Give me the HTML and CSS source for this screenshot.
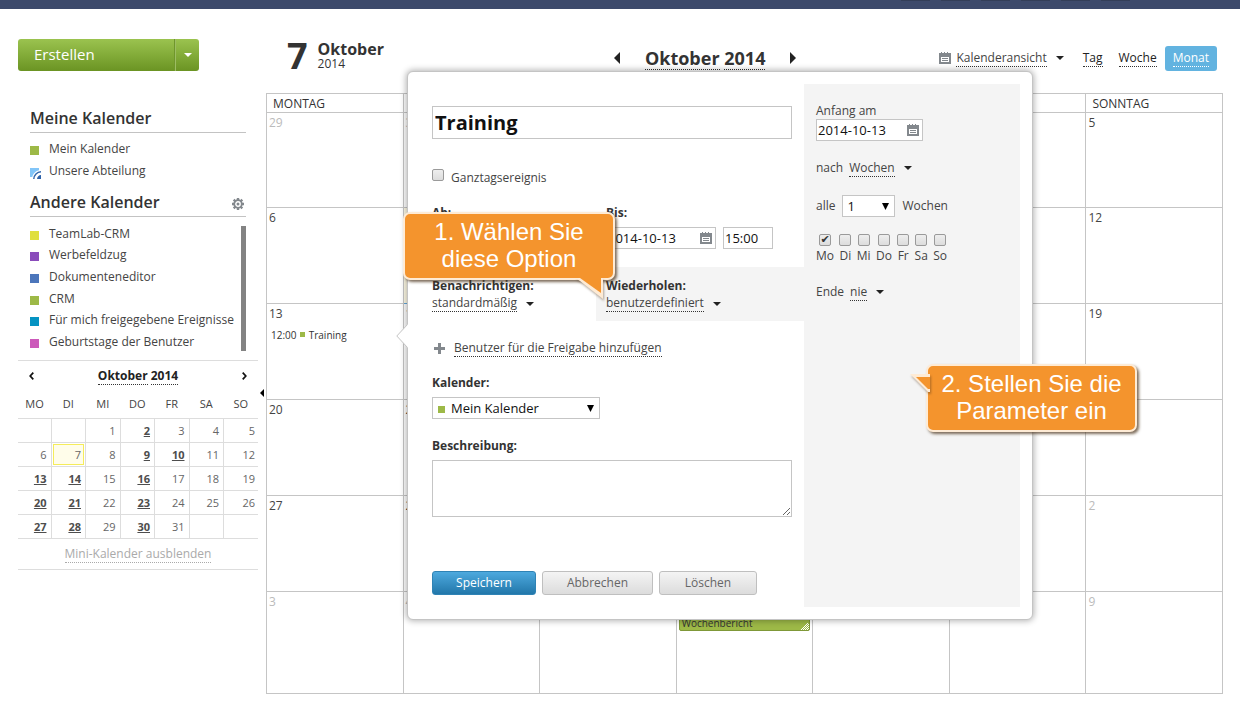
FILE: index.html
```html
<!DOCTYPE html>
<html lang="de">
<head>
<meta charset="utf-8">
<title>Kalender</title>
<link rel="stylesheet" href="styles.css">
</head>
<body>
<svg class="defs" aria-hidden="true">
  <symbol id="cal" viewBox="0 0 12 12"><path fill="#83888d" d="M0 1h2V0h1v1h2V0h1v1h2V0h1v1h3v11H0z"/><path fill="#fff" d="M2 5h8v5H2z"/><path fill="#83888d" d="M3 6h6v1H3zM3 8h6v1H3z"/></symbol>
  <symbol id="down" viewBox="0 0 8 4"><path fill="#222" d="M0 0h8L4 4z"/></symbol>
  <symbol id="caret" viewBox="0 0 7 7"><path fill="#000" d="M0 0h7L3.500 7z"/></symbol>
</svg>

<header class="topbar"><i></i><i></i><i></i><i></i><i></i><i></i></header>

<div class="page">
  <aside class="sidebar">
    <div class="create">
      <button class="create-main" type="button">Erstellen</button>
      <button class="create-more" type="button" aria-label="Mehr"><svg width="8" height="4" viewBox="0 0 8 4"><path fill="#fff" d="M0 0h8L4 4z"/></svg></button>
    </div>

    <div class="group">
      <h2>Meine Kalender</h2>
      <ul class="cals own">
        <li><i class="dot green"></i>Mein Kalender</li>
        <li><svg class="feed" width="11" height="11" viewBox="0 0 11 11"><path fill="#82c5f8" d="M0 0h9v9H0z"/><path fill="#fff" d="M2 11C2 6 6 2 11 2v9z"/><path fill="none" stroke="#3468ad" stroke-width="1.500" d="M3.800 11C4 7 7 4 11 3.800"/><path fill="#2d62aa" d="M7 11c0-2 2-4 4-4v4z"/></svg>Unsere Abteilung</li>
      </ul>
    </div>
    <div class="group">
      <h2>Andere Kalender
        <button class="gear" type="button" aria-label="Einstellungen"><svg width="12" height="12" viewBox="0 0 12 12"><path stroke="#83888d" stroke-width="2.400" d="M6 0v2.500M6 9.500V12M0 6h2.500M9.500 6H12M1.700 1.700l1.800 1.800M8.500 8.500l1.800 1.800M1.700 10.300l1.800-1.800M8.500 3.500l1.800-1.800"/><circle cx="6" cy="6" r="3.800" fill="none" stroke="#83888d" stroke-width="1.800"/><circle cx="6" cy="6" r="1.500" fill="#83888d"/></svg></button>
      </h2>
      <div class="scroll">
        <ul class="cals">
          <li><i class="dot yellow"></i>TeamLab-CRM</li>
          <li><i class="dot violet"></i>Werbefeldzug</li>
          <li><i class="dot blue"></i>Dokumenteneditor</li>
          <li><i class="dot green"></i>CRM</li>
          <li><i class="dot cyan"></i>Für mich freigegebene Ereignisse</li>
          <li><i class="dot pink"></i>Geburtstage der Benutzer</li>
        </ul>
        <div class="bar"></div>
      </div>
    </div>

    <section class="mini">
      <div class="mini-head">
        <button type="button" aria-label="Zurück"><svg width="5" height="8" viewBox="0 0 5 8"><path fill="none" stroke="#111" stroke-width="1.700" d="M4.300 .6L1.200 4l3.100 3.400"/></svg></button>
        <strong><span class="dotted">Oktober</span> <span class="dotted">2014</span></strong>
        <button type="button" aria-label="Weiter"><svg width="5" height="8" viewBox="0 0 5 8"><path fill="none" stroke="#111" stroke-width="1.700" d="M.7.6L3.800 4 .7 7.400"/></svg></button>
      </div>
      <table>
        <thead><tr><th class="first">MO</th><th>DI</th><th>MI</th><th>DO</th><th>FR</th><th>SA</th><th>SO</th></tr></thead>
        <tbody>
          <tr><td></td><td></td><td>1</td><td><b>2</b></td><td>3</td><td>4</td><td>5</td></tr>
          <tr><td>6</td><td class="now"><div>7</div></td><td>8</td><td><b>9</b></td><td><b>10</b></td><td>11</td><td>12</td></tr>
          <tr><td><b>13</b></td><td><b>14</b></td><td>15</td><td><b>16</b></td><td>17</td><td>18</td><td>19</td></tr>
          <tr><td><b>20</b></td><td><b>21</b></td><td>22</td><td><b>23</b></td><td>24</td><td>25</td><td>26</td></tr>
          <tr><td><b>27</b></td><td><b>28</b></td><td>29</td><td><b>30</b></td><td>31</td><td></td><td></td></tr>
        </tbody>
      </table>
      <div class="mini-foot"><a href="#" class="dotted">Mini-Kalender ausblenden</a></div>
    </section>
  </aside>

  <button class="collapse" type="button" aria-label="Einklappen"><svg width="4" height="8" viewBox="0 0 4 8"><path d="M4 0v8L0 4z"/></svg></button>

  <main class="main">
    <div class="main-head">
      <div class="today"><b class="num">7</b><div><b>Oktober</b><span>2014</span></div></div>
      <div class="nav">
        <button type="button" aria-label="Vorheriger Monat"><svg width="6" height="12" viewBox="0 0 6 12"><path fill="#222" d="M6 0v12L0 6z"/></svg></button>
        <strong><span class="dotted">Oktober</span> <span class="dotted">2014</span></strong>
        <button type="button" aria-label="Nächster Monat"><svg width="6" height="12" viewBox="0 0 6 12"><path fill="#222" d="M0 0v12l6-6z"/></svg></button>
      </div>
      <div class="views">
        <svg width="12" height="12"><use href="#cal"/></svg>
        <a href="#" class="dotted view-menu">Kalenderansicht</a>
        <svg class="view-arrow" width="8" height="4"><use href="#down"/></svg>
        <a href="#" class="dotted dark">Tag</a>
        <a href="#" class="dotted dark week">Woche</a>
        <a href="#" class="active"><span class="dotted">Monat</span></a>
      </div>
    </div>

    <table class="month">
      <thead><tr><th>MONTAG</th><th></th><th></th><th></th><th></th><th></th><th>SONNTAG</th></tr></thead>
      <tbody>
        <tr><td class="off">29</td><td class="off">30</td><td></td><td></td><td></td><td></td><td>5</td></tr>
        <tr><td>6</td><td class="current"></td><td></td><td></td><td></td><td></td><td>12</td></tr>
        <tr><td>13<div class="event">12:00 <i></i> Training</div></td><td>14</td><td></td><td></td><td></td><td></td><td>19</td></tr>
        <tr><td>20</td><td>21</td><td></td><td></td><td></td><td></td><td></td></tr>
        <tr><td>27</td><td>28</td><td></td><td></td><td></td><td></td><td class="off">2</td></tr>
        <tr><td class="off">3</td><td class="off">4</td><td></td><td class="booked"><div class="block">Wochenbericht<svg width="8" height="8" viewBox="0 0 8 8"><path stroke="#fff" stroke-width="1" stroke-dasharray="1 1" d="M0 7.500h8M1 6.500h7M2 5.500h6M3 4.500h5M4 3.500h4M5 2.500h3M6 1.500h2"/></svg></div></td><td></td><td></td><td class="off">9</td></tr>
      </tbody>
    </table>
  </main>
</div>

<form class="dialog">
  <svg class="beak" width="12" height="24" viewBox="0 0 12 24"><path fill="#fff" d="M12 0L1 12l11 12z"/><path fill="none" stroke="#c4c4c4" d="M11.500 .5L.8 12l10.700 11.500"/></svg>
  <div class="fields">
    <input class="title" type="text" value="Training" aria-label="Titel">
    <label class="allday"><input type="checkbox">Ganztagsereignis</label>
    <div class="pair">
      <div>
        <label class="cap" for="from">Ab:</label>
        <div class="when"><span class="date"><input id="from" type="text"></span><input class="time" type="text" aria-label="Beginn"></div>
      </div>
      <div class="second">
        <label class="cap" for="to">Bis:</label>
        <div class="when"><span class="date"><input id="to" type="text" value="2014-10-13"><svg width="12" height="12"><use href="#cal"/></svg></span><input class="time" type="text" value="15:00" aria-label="Ende"></div>
      </div>
    </div>
    <div class="pair options">
      <div><span class="cap">Benachrichtigen:</span><div class="pick"><a href="#" class="dotted">standardmäßig</a><svg width="8" height="4"><use href="#down"/></svg></div></div>
      <div class="second repeat"><span class="cap">Wiederholen:</span><div class="pick"><a href="#" class="dotted">benutzerdefiniert</a><svg width="8" height="4"><use href="#down"/></svg></div></div>
    </div>
    <div class="share"><svg width="11" height="11" viewBox="0 0 11 11"><path fill="#83888d" d="M4 0h3v4h4v3H7v4H4V7H0V4h4z"/></svg><a href="#" class="dotted">Benutzer für die Freigabe hinzufügen</a></div>
    <label class="cap calendar-cap" for="calendar">Kalender:</label>
    <div class="select calendar"><select id="calendar"><option>Mein Kalender</option></select><i></i><svg width="7" height="7"><use href="#caret"/></svg></div>
    <label class="cap text-cap" for="text">Beschreibung:</label>
    <textarea id="text"></textarea>
    <div class="actions">
      <button class="save" type="button">Speichern</button>
      <button class="cancel" type="button">Abbrechen</button>
      <button class="delete" type="button">Löschen</button>
    </div>
  </div>
  <div class="params">
    <label for="start">Anfang am</label>
    <span class="date"><input id="start" type="text" value="2014-10-13"><svg width="12" height="12"><use href="#cal"/></svg></span>
    <div class="row">nach <a href="#" class="dotted">Wochen</a><svg width="8" height="4"><use href="#down"/></svg></div>
    <div class="row every"><label for="every">alle</label><div class="select"><select id="every"><option>1</option></select><svg width="7" height="7"><use href="#caret"/></svg></div>Wochen</div>
    <div class="days">
      <label><input type="checkbox" checked>Mo</label><label><input type="checkbox">Di</label><label><input type="checkbox">Mi</label><label><input type="checkbox">Do</label><label><input type="checkbox">Fr</label><label><input type="checkbox">Sa</label><label><input type="checkbox">So</label>
    </div>
    <div class="row">Ende <a href="#" class="dotted">nie</a><svg width="8" height="4"><use href="#down"/></svg></div>
  </div>
</form>

<div class="callout one">1. Wählen Sie<br>diese Option<svg width="32" height="24" viewBox="0 0 32 24"><path fill="#feebd5" d="M0 0l5 3 23 18V0z"/><path fill="#f4942d" d="M5 0l21 15V0z"/></svg></div>
<div class="callout two">2. Stellen Sie die<br>Parameter ein<svg width="20" height="24" viewBox="0 0 20 24"><path fill="#feebd5" d="M20 1H0l18 18h2z"/><path fill="#f4942d" d="M20 4H6l12 12h2z"/></svg></div>
</body>
</html>
```

FILE: styles.css
```css
* { box-sizing: border-box; }
body {
  margin: 0;
  position: relative;
  background: #fff;
  color: #444;
  font: 12px/18px "Open Sans", "Liberation Sans", sans-serif;
}
button, input, select, textarea { font: inherit; margin: 0; border-radius: 0; }
button { padding: 0; border: 0; background: none; color: inherit; cursor: pointer; }
a { color: inherit; text-decoration: none; }
ul { list-style: none; margin: 0; padding: 0; }
svg { display: block; flex: none; }
.defs { position: absolute; width: 0; height: 0; }
.dotted { border-bottom: 1px dotted #333; }

.topbar { height: 9px; background: #3d4a6b; display: flex; justify-content: flex-end; gap: 11px; padding-right: 110px; }
.topbar i { width: 29px; height: 1px; background: #333e58; }

.page { display: flex; align-items: flex-start; padding: 0 17px 14px 18px; }

/* Sidebar */
.sidebar { width: 240px; flex: none; padding-top: 30px; }
.create { display: flex; width: 181px; height: 32px; border-radius: 3px; overflow: hidden; background: linear-gradient(#9bc34f, #6b9423); color: #fff; }
.create-main { flex: 1; text-align: left; padding: 0 0 2px 16px; font-size: 15px; }
.create-more { width: 24px; display: flex; align-items: center; justify-content: center; border-left: 1px solid #9dbd63; box-shadow: -1px 0 #6f962c; }
.group { margin: 0 12px; }
.create + .group { margin-top: 35px; }
h2 { display: flex; align-items: center; justify-content: space-between; margin: 0; padding-bottom: 2px; border-bottom: 1px solid #c3c3c3; color: #333; font-size: 16px; font-weight: 600; line-height: 24px; }
.gear { padding: 4px 2px 0 0; }
.own { margin: 5px 0 8px; }
.cals li { display: flex; align-items: center; line-height: 22px; }
.dot { width: 9px; height: 9px; margin: 3px 10px 0 0; }
.feed { margin: 5px 8px 0 0; }
.green { background: #9db947; }
.yellow { background: #e0df3e; }
.violet { background: #8a4cbb; }
.blue { background: #4c76bb; }
.cyan { background: #0593c2; }
.pink { background: #cc59ba; }
.scroll { display: flex; justify-content: space-between; height: 130px; margin: 6px 0 7px; }
.scroll .cals { display: grid; grid-auto-rows: 1fr; white-space: nowrap; }
.scroll li { line-height: 20px; }
.bar { width: 5px; margin: 3px 0 2px; background: #838383; }

.mini { border-top: 1px solid #ddd; border-bottom: 1px solid #ddd; }
.mini-head { display: flex; align-items: center; justify-content: space-between; height: 30px; padding: 0 11px; color: #222; }
.mini table { width: 100%; border-collapse: collapse; table-layout: fixed; font-size: 11px; }
.mini th { height: 27px; padding: 0; font-weight: 400; }
.mini .first { width: 33px; }
.mini td { height: 24px; padding: 2px 4px 0 0; border: 1px solid #ddd; text-align: right; color: #666; line-height: 18px; }
.mini td:first-child { border-left: 0; }
.mini td:last-child { border-right: 0; padding-right: 3px; }
.mini td b { text-decoration: underline; color: #4d4d4d; }
.mini td.now { padding: 0 1px; }
.now div { height: 21px; padding: 1px 2px 0 0; border: 1px solid #f5ec5a; background: #fffdea; }
.mini-foot { height: 30px; text-align: center; line-height: 30px; color: #aaa; }
.mini-foot .dotted { border-color: #aaa; }
.collapse { width: 8px; margin-top: 380px; padding-left: 2px; }

/* Month view */
.main { flex: 1; min-width: 0; }
.main-head { display: flex; align-items: center; height: 84px; padding: 14px 6px 0 21px; }
.today { flex: 1; display: flex; align-items: center; gap: 10px; height: 40px; margin-bottom: 4px; color: #333; }
.today .num { font-size: 36px; line-height: 40px; }
.today div { display: flex; flex-direction: column; font-size: 16px; line-height: 16px; }
.today span { font-size: 12px; line-height: 14px; }
.nav { display: flex; align-items: center; gap: 25px; color: #333; font-size: 18px; line-height: 22px; }
.nav .dotted { display: inline-block; }
.views { display: flex; align-items: center; margin-left: 143px; line-height: 16px; }
.view-menu { margin: 0 9px 0 5px; }
.view-arrow { margin-right: 19px; }
.dark { color: #222; }
.week { margin: 0 8px 0 16px; }
.active { padding: 4px 8px; border-radius: 3px; background: #62b3e0; color: #fff; }
.active .dotted { display: block; border-color: #fff; }
.month { width: 100%; border-collapse: collapse; table-layout: fixed; }
.month th, .month td { border: 1px solid #c5c5c5; text-align: left; vertical-align: top; }
.month th { height: 19px; padding: 1px 6px 0; font-weight: 400; line-height: 17px; color: #333; }
.month td { height: 96px; padding: 1px 2px; }
.month tr:first-child td { height: 95px; }
.month tr:last-child td { height: 102px; }
.month .off { color: #bbb; }
.month .current { border: 1px solid #62a8dc; background: #fffbe6; }
.event { margin: 5px 2px; font-size: 10px; line-height: 14px; color: #333; }
.event i { display: inline-block; width: 5px; height: 5px; margin: 0 1px 2px; background: #9db947; }
.month .booked { padding-top: 23px; }
.block { display: flex; align-items: flex-end; justify-content: space-between; height: 16px; padding-left: 2px; border: 1px solid #7f9838; border-radius: 2px; background: #9db947; color: #333; font-size: 10px; line-height: 14px; }

/* Event dialog */
.dialog {
  position: absolute; left: 407px; top: 71px; width: 626px;
  display: flex; padding: 12px; border: 1px solid #c4c4c4; border-radius: 6px;
  background: #fff; box-shadow: 0 0 6px 1px rgba(0, 0, 0, .3);
}
.beak { position: absolute; left: -12px; top: 252px; }
.fields { flex: 1; min-width: 0; padding: 22px 12px 12px; }
.fields .dotted, .params .dotted { display: block; line-height: 16px; }
.dialog input[type="text"], textarea, select { border: 1px solid #c5c5c5; background: #fff; color: #111; }
.dialog .title { display: block; width: 100%; height: 33px; padding: 0 2px; color: #000; font-size: 20px; font-weight: 700; }
.dialog input[type="checkbox"] {
  appearance: none; width: 12px; height: 12px; border: 1px solid #9a9a9a; border-radius: 2px;
  background: linear-gradient(#eee, #dcdcdc);
}
.dialog input[type="checkbox"]:checked::before { content: "✔"; display: block; margin: -1px 0 0; font: 11px/11px "DejaVu Sans", sans-serif; color: #333; text-align: center; }
.allday { display: flex; gap: 7px; margin: 29px 0 18px; line-height: 20px; height: 18px; }
.allday input { margin-top: 1px; }
.cap { display: block; color: #333; font-weight: 700; line-height: 18px; }
.pair { display: grid; grid-template-columns: 164px 1fr; }
.second { padding-left: 10px; }
.when { display: flex; gap: 7px; margin-top: 5px; }
.date { display: grid; align-items: center; width: 110px; }
.date > * { grid-area: 1 / 1; }
.date svg { justify-self: end; margin-right: 4px; }
.date input { width: 100%; }
.dialog .date input, .dialog .time { height: 22px; padding: 0 1px; font-size: 13px; }
.time { width: 50px; }
.options { margin: 18px -12px 0 0; }
.options > div { padding-top: 10px; height: 54px; }
.repeat { background: #f4f4f4; }
.pick { display: flex; align-items: center; gap: 9px; }
.share { display: flex; align-items: center; gap: 9px; margin: 18px 0 17px; padding-left: 2px; height: 18px; }
.select { display: grid; align-items: center; width: 53px; margin-top: 5px; }
.select > * { grid-area: 1 / 1; }
.select svg { justify-self: end; margin-right: 6px; }
.select select { appearance: none; width: 100%; height: 22px; padding: 0 4px; font-size: 13px; line-height: 20px; }
.calendar { width: 168px; }
.calendar select { padding-left: 18px; }
.calendar i { width: 7px; height: 7px; margin: 2px 0 0 6px; background: #9db947; }
.text-cap { margin: 18px 0 5px; }
textarea { display: block; width: 100%; height: 57px; resize: vertical; }
.actions { display: flex; gap: 6px; margin-top: 54px; }
.actions button { height: 24px; border: 1px solid #bfbfbf; border-radius: 3px; background: linear-gradient(#f4f4f4, #dcdcdc); color: #666; }
.actions .save { width: 104px; border-color: #2f83b5; background: linear-gradient(#4da9de, #2277aa); color: #fff; }
.cancel { width: 111px; }
.delete { width: 98px; }
.params { width: 216px; padding: 18px 12px; background: #f4f4f4; }
.params > label { display: block; line-height: 17px; }
.params .date { width: 107px; }
.row { display: flex; align-items: center; gap: 9px; height: 22px; margin: 16px 0; }
.row .dotted { margin-left: -3px; }
.row.every { gap: 7px; }
.every .select { margin: 0; }
.days { display: flex; justify-content: space-between; width: 131px; margin: 17px 0 16px; }
.days label { display: flex; flex-direction: column; align-items: center; line-height: 19px; }

/* Step hints */
.callout {
  position: absolute; padding: 4px 0 6px; border: 2px solid #feebd5; border-radius: 7px;
  background: #f4942d; color: #fff; font: 24px/27px "Liberation Sans", Arial, sans-serif; text-align: center;
  box-shadow: 2px 2px 3px rgba(70, 45, 20, .7);
}
.callout svg { position: absolute; filter: drop-shadow(1px 2px 1px rgba(70, 45, 20, .4)); }
.one { left: 403px; top: 212px; width: 212px; }
.one svg { right: 6px; top: 64px; }
.two { left: 926px; top: 364px; width: 211px; }
.two svg { left: -18px; top: 7px; }
```
